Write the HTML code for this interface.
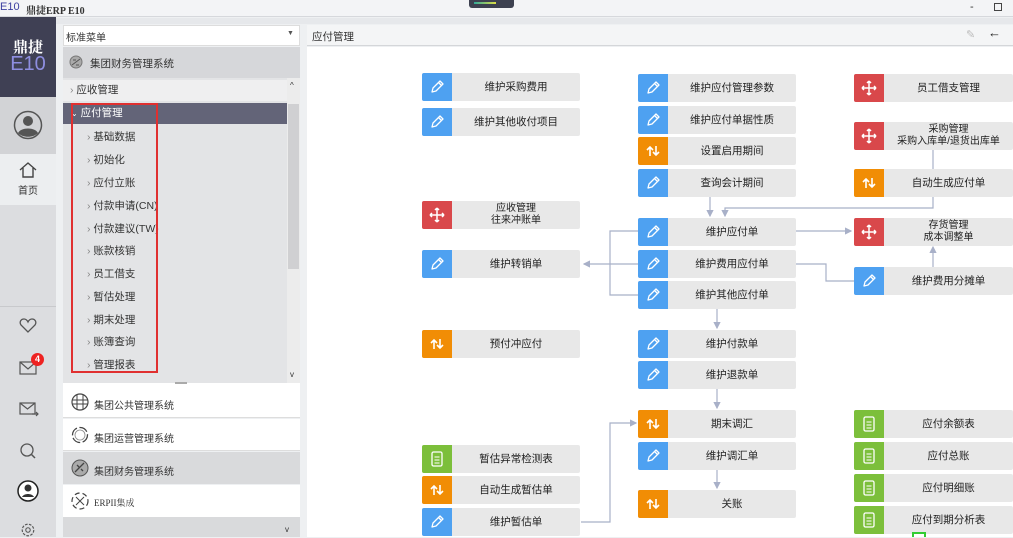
<!DOCTYPE html>
<html><head><meta charset="utf-8"><style>
*{margin:0;padding:0;box-sizing:border-box}
body{width:1013px;height:537px;overflow:hidden;background:#eef0f2;font-family:"Liberation Sans","Noto Sans CJK SC",sans-serif;font-size:11px;color:#333;position:relative}
.a{position:absolute}
.box{position:absolute;width:158px;height:28px;background:#e8e8e8;border-radius:2px}
.box .ic{position:absolute;left:0;top:0;width:30px;height:28px;border-radius:2px 0 0 2px;display:flex;align-items:center;justify-content:center}
.box .t{position:absolute;left:30px;right:0;top:0;height:28px;display:flex;align-items:center;justify-content:center;text-align:center;font-size:10.5px;line-height:13px;color:#222}
.b{background:#4ea1f1}.o{background:#f18d05}.r{background:#d9484b}.g{background:#7cbf3b}
.tree div{position:absolute;left:0;width:224px;height:21px;line-height:21px;font-size:10.5px}
</style></head><body>
<div class="a" style="left:0;top:0;width:1013px;height:17px;background:#f3f4f6;border-bottom:1px solid #d6d8dc"></div>
<div class="a" style="left:0;top:1px;font-size:11px;color:#3c3fa0">E10</div>
<div class="a" style="left:26px;top:2px;font-size:10px;font-weight:bold;color:#333;font-family:'Liberation Serif','Noto Serif CJK SC',serif">鼎捷ERP E10</div>
<div class="a" style="left:469px;top:0;width:45px;height:8px;background:#3d4150;border-radius:0 0 3px 3px"></div>
<div class="a" style="left:474px;top:2px;width:22px;height:2px;background:linear-gradient(90deg,#3a9,#dd4)"></div>
<div class="a" style="left:970px;top:1px;font-size:11px">-</div>
<div class="a" style="left:994px;top:3px;width:8px;height:8px;border:1px solid #444"></div>
<div class="a" style="left:0;top:18px;width:1013px;height:6px;background:#e6e8eb"></div>
<div class="a" style="left:0;top:17px;width:56px;height:520px;background:#dcdde0"></div>
<div class="a" style="left:0;top:17px;width:56px;height:80px;background:#3f4054"></div>
<div class="a" style="left:0;top:36px;width:56px;text-align:center;color:#fff;font-weight:bold;font-size:15px;font-family:'Liberation Serif','Noto Serif CJK SC',serif">鼎捷</div>
<div class="a" style="left:0;top:53px;width:56px;text-align:center;color:#8e8ee0;font-size:20px">E10</div>
<div class="a" style="left:0;top:97px;width:56px;height:57px;background:#d2d3d6"></div>
<svg class="a" style="left:13px;top:110px" width="30" height="30" viewBox="0 0 30 30"><circle cx="15" cy="15" r="13.5" fill="none" stroke="#555" stroke-width="1.5"/><circle cx="15" cy="11" r="5" fill="#555"/><path d="M5 23c3-6 17-6 20 0c-5 5-15 5-20 0z" fill="#555"/></svg>
<div class="a" style="left:0;top:154px;width:56px;height:51px;background:#eceef0"></div>
<svg class="a" style="left:18px;top:161px" width="20" height="18" viewBox="0 0 20 18"><path d="M2 9L10 2L18 9M5 7V16H15V7" fill="none" stroke="#444" stroke-width="1.4"/></svg>
<div class="a" style="left:0;top:182px;width:56px;text-align:center;font-size:10px">首页</div>
<div class="a" style="left:0;top:306px;width:56px;height:1px;background:#c8c9cc"></div>
<svg class="a" style="left:19px;top:318px" width="18" height="16" viewBox="0 0 18 16"><path d="M9 14L2 7C0 4 2 1 5 1C7 1 8 2 9 4C10 2 11 1 13 1C16 1 18 4 16 7Z" fill="none" stroke="#555" stroke-width="1.3"/></svg>
<svg class="a" style="left:19px;top:361px" width="18" height="14" viewBox="0 0 18 14"><rect x="1" y="1" width="16" height="12" fill="none" stroke="#555" stroke-width="1.2"/><path d="M1 1L9 8L17 1" fill="none" stroke="#555" stroke-width="1.2"/></svg>
<div class="a" style="left:31px;top:353px;width:13px;height:13px;border-radius:50%;background:#e22;color:#fff;font-size:9px;text-align:center;line-height:13px;font-weight:bold">4</div>
<svg class="a" style="left:19px;top:402px" width="20" height="15" viewBox="0 0 20 15"><rect x="1" y="1" width="15" height="11" fill="none" stroke="#555" stroke-width="1.2"/><path d="M1 1L8.5 7L16 1M13 12h6M17 10l2 2l-2 2" fill="none" stroke="#555" stroke-width="1.2"/></svg>
<svg class="a" style="left:19px;top:442px" width="18" height="18" viewBox="0 0 18 18"><circle cx="8" cy="8" r="6" fill="none" stroke="#555" stroke-width="1.3"/><path d="M12.5 12.5L16 16" stroke="#555" stroke-width="1.5"/></svg>
<svg class="a" style="left:17px;top:480px" width="22" height="22" viewBox="0 0 22 22"><circle cx="11" cy="11" r="10" fill="#fff" stroke="#222" stroke-width="1.5"/><circle cx="11" cy="8" r="3.5" fill="#333"/><path d="M5 17c2-4 10-4 12 0z" fill="#333"/></svg>
<svg class="a" style="left:19px;top:522px" width="18" height="16" viewBox="0 0 18 18"><circle cx="9" cy="9" r="6.5" fill="none" stroke="#555" stroke-width="1.3" stroke-dasharray="3 1.5"/><circle cx="9" cy="9" r="2.5" fill="none" stroke="#555" stroke-width="1.2"/></svg>
<div class="a" style="left:63px;top:25px;width:237px;height:21px;background:#fff;border:1px solid #ddd"></div>
<div class="a" style="left:66px;top:29px;font-size:10px">标准菜单</div>
<div class="a" style="left:287px;top:30px;font-size:7px;color:#555">▼</div>
<div class="a" style="left:63px;top:47px;width:237px;height:31px;background:#d6d7da"></div>
<svg class="a" style="left:69px;top:55px" width="14" height="14" viewBox="0 0 14 14"><circle cx="7" cy="7" r="6" fill="#aaa" stroke="#777"/><path d="M3 10L11 4M4 5h3M7 10h3" stroke="#555" stroke-width="1"/></svg>
<div class="a" style="left:90px;top:56px;font-size:10.5px">集团财务管理系统</div>
<div class="a" style="left:63px;top:78px;width:237px;height:305px;background:#e3e4e6"></div>
<div class="a" style="left:287px;top:78px;width:13px;height:305px;background:#ececec"></div>
<div class="a" style="left:288px;top:104px;width:11px;height:165px;background:#d0d0d2"></div>
<div class="a" style="left:290px;top:81px;font-size:8px;color:#333">^</div>
<div class="a" style="left:290px;top:370px;font-size:8px;color:#333">v</div>
<div class="a tree" style="left:63px;top:0">
<div style="top:80px;background:#efeff0;padding-left:7px"><span style="color:#888">›</span> 应收管理</div>
<div style="top:103px;background:#636478;color:#fff;padding-left:8px"><span style="font-size:8px">⌄</span> 应付管理</div>
<div style="top:127px;padding-left:24px"><span style="color:#888">›</span> 基础数据</div>
<div style="top:150px;padding-left:24px"><span style="color:#888">›</span> 初始化</div>
<div style="top:173px;padding-left:24px"><span style="color:#888">›</span> 应付立账</div>
<div style="top:196px;padding-left:24px"><span style="color:#888">›</span> 付款申请(CN)</div>
<div style="top:219px;padding-left:24px"><span style="color:#888">›</span> 付款建议(TW)</div>
<div style="top:241px;padding-left:24px"><span style="color:#888">›</span> 账款核销</div>
<div style="top:264px;padding-left:24px"><span style="color:#888">›</span> 员工借支</div>
<div style="top:287px;padding-left:24px"><span style="color:#888">›</span> 暂估处理</div>
<div style="top:310px;padding-left:24px"><span style="color:#888">›</span> 期末处理</div>
<div style="top:332px;padding-left:24px"><span style="color:#888">›</span> 账簿查询</div>
<div style="top:355px;padding-left:24px"><span style="color:#888">›</span> 管理报表</div>
</div>
<div class="a" style="left:71px;top:103px;width:87px;height:270px;border:2px solid #e03030"></div>
<div class="a" style="left:63px;top:383px;width:237px;height:3px;background:#fff"></div>
<div class="a" style="left:175px;top:382px;width:12px;height:2px;background:#aaa"></div>
<div class="a" style="left:63px;top:386px;width:237px;height:32px;background:#fff;border-bottom:1px solid #ddd"></div>
<div class="a" style="left:63px;top:419px;width:237px;height:32px;background:#fff;border-bottom:1px solid #ddd"></div>
<div class="a" style="left:63px;top:452px;width:237px;height:32px;background:#d9dadc"></div>
<div class="a" style="left:63px;top:485px;width:237px;height:32px;background:#fff"></div>
<div class="a" style="left:63px;top:517px;width:237px;height:20px;background:#d9dadc"></div>
<div class="a" style="left:285px;top:525px;font-size:8px">v</div>
<svg class="a" style="left:71px;top:393px" width="18" height="18" viewBox="0 0 18 18"><circle cx="9" cy="9" r="8" fill="none" stroke="#444" stroke-width="1.2"/><path d="M1 7h16M1 11h16M6 1.5v15M12 1.5v15" stroke="#444" stroke-width="1"/></svg>
<svg class="a" style="left:71px;top:426px" width="18" height="18" viewBox="0 0 18 18"><circle cx="9" cy="9" r="7.5" fill="none" stroke="#444" stroke-width="1.3" stroke-dasharray="9 2.5"/><circle cx="9" cy="9" r="5" fill="none" stroke="#888" stroke-width="0.8"/></svg>
<svg class="a" style="left:71px;top:459px" width="18" height="18" viewBox="0 0 18 18"><circle cx="9" cy="9" r="8" fill="#aaa" stroke="#555"/><path d="M4 13L13 4M6 6l2 2M10 10l2 2" stroke="#444" stroke-width="1.3"/></svg>
<svg class="a" style="left:71px;top:492px" width="18" height="18" viewBox="0 0 18 18"><circle cx="9" cy="9" r="8" fill="none" stroke="#444" stroke-width="1.2" stroke-dasharray="5 3"/><path d="M5 5l8 8M13 5l-8 8" stroke="#444" stroke-width="1"/></svg>
<div class="a" style="left:94px;top:397px;font-size:10px">集团公共管理系统</div>
<div class="a" style="left:94px;top:430px;font-size:10px">集团运营管理系统</div>
<div class="a" style="left:94px;top:463px;font-size:10px">集团财务管理系统</div>
<div class="a" style="left:94px;top:496px;font-size:9px;font-family:'Liberation Serif','Noto Serif CJK SC',serif">ERPII集成</div>
<div class="a" style="left:307px;top:25px;width:706px;height:21px;background:#f4f5f6;border-bottom:1px solid #d4d6d9"></div>
<div class="a" style="left:312px;top:29px;font-size:10.5px">应付管理</div>
<div class="a" style="left:966px;top:28px;font-size:11px;color:#bbb">✎</div>
<div class="a" style="left:988px;top:25px;font-size:13px;color:#222">←</div>
<div class="a" style="left:307px;top:47px;width:706px;height:490px;background:#fff"></div>
<svg class="a" style="left:0;top:0" width="1013" height="537">
<defs><marker id="m" markerWidth="6" markerHeight="6" refX="5" refY="3" orient="auto"><path d="M0 0L6 3L0 6z" fill="#a8b0c8"/></marker></defs>
<g fill="none" stroke="#a8b0c8" stroke-width="1.2">
<path d="M710 196V216" marker-end="url(#m)"/>
<path d="M933 196V208H725V216" marker-end="url(#m)"/>
<path d="M933 149V169"/>
<path d="M796 231H851" marker-end="url(#m)"/>
<path d="M796 264H826V281H854"/>
<path d="M933 267V247" marker-end="url(#m)"/>
<path d="M638 231H610V295H638M638 264H584" marker-end="url(#m)"/>
<path d="M717 309V328" marker-end="url(#m)"/>
<path d="M717 389V408" marker-end="url(#m)"/>
<path d="M717 470V488" marker-end="url(#m)"/>
<path d="M581 522H610V423H636" marker-end="url(#m)"/>
</g></svg>
<svg width="0" height="0" style="position:absolute"><defs>
<g id="pen"><path d="M4 14L5 10L12 3L15 6L8 13Z M10.5 4.5l3 3" fill="none" stroke="#fff" stroke-width="1.3" stroke-linejoin="round"/></g>
<g id="cyc"><path d="M6 14V5M3 8l3-3l3 3M12 4v9M9 10l3 3l3-3" fill="none" stroke="#fff" stroke-width="1.6"/></g>
<g id="mv"><path d="M9 2v14M2 9h14M9 2l-2 2M9 2l2 2M9 16l-2-2M9 16l2-2M2 9l2-2M2 9l2 2M16 9l-2-2M16 9l-2 2" fill="none" stroke="#fff" stroke-width="1.5"/></g>
<g id="doc"><rect x="4" y="2" width="10" height="14" rx="1.5" fill="none" stroke="#fff" stroke-width="1.3"/><path d="M6.5 7h5M6.5 10h5M6.5 13h5" stroke="#fff" stroke-width="1.1"/></g>
</defs></svg>
<div id="boxes"></div>
<script>
var B=[
[422,73,'b','pen','维护采购费用'],[422,108,'b','pen','维护其他收付项目'],[422,201,'r','mv','应收管理<br>往来冲账单'],[422,250,'b','pen','维护转销单'],[422,330,'o','cyc','预付冲应付'],[422,445,'g','doc','暂估异常检测表'],[422,476,'o','cyc','自动生成暂估单'],[422,508,'b','pen','维护暂估单'],
[638,74,'b','pen','维护应付管理参数'],[638,106,'b','pen','维护应付单据性质'],[638,137,'o','cyc','设置启用期间'],[638,169,'b','pen','查询会计期间'],[638,218,'b','pen','维护应付单'],[638,250,'b','pen','维护费用应付单'],[638,281,'b','pen','维护其他应付单'],[638,330,'b','pen','维护付款单'],[638,361,'b','pen','维护退款单'],[638,410,'o','cyc','期末调汇'],[638,442,'b','pen','维护调汇单'],[638,490,'o','cyc','关账'],
[854,74,'r','mv','员工借支管理'],[854,122,'r','mv','采购管理<br>采购入库单/退货出库单'],[854,169,'o','cyc','自动生成应付单'],[854,218,'r','mv','存货管理<br>成本调整单'],[854,267,'b','pen','维护费用分摊单'],[854,410,'g','doc','应付余额表'],[854,442,'g','doc','应付总账'],[854,474,'g','doc','应付明细账'],[854,506,'g','doc','应付到期分析表']];
var h='';B.forEach(function(b){var w=b[0]==854?159:158;h+='<div class="box" style="left:'+b[0]+'px;top:'+b[1]+'px;width:'+w+'px"><div class="ic '+b[2]+'"><svg width="18" height="18" viewBox="0 0 18 18"><use href="#'+b[3]+'"/></svg></div><div class="t"'+(b[4].indexOf('<br>')>0?' style="font-size:10px;line-height:12px"':'')+'>'+b[4]+'</div></div>';});
document.getElementById('boxes').innerHTML=h;
</script>
<div class="a" style="left:912px;top:532px;width:14px;height:5px;border:2px solid #3c3;border-bottom:none"></div>
</body></html>
